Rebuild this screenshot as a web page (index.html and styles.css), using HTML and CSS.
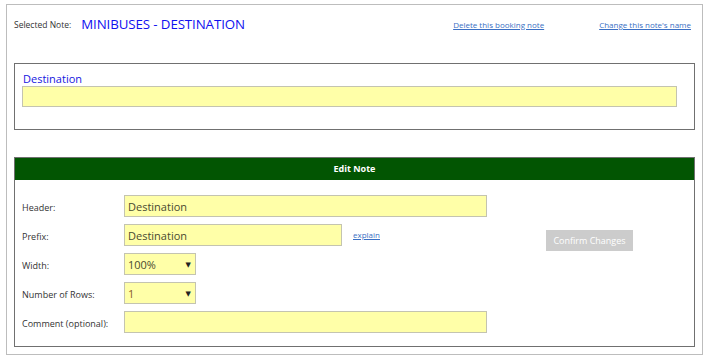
FILE: index.html
```html
<!DOCTYPE html>
<html>
<head>
<meta charset="utf-8">
<link rel="stylesheet" href="styles.css">
</head>
<body>
<div class="page">
  <div class="top">
    <span class="sel-label">Selected Note:</span>
    <span class="sel-title">MINIBUSES - DESTINATION</span>
    <a class="link link-del" href="#">Delete this booking note</a>
    <a class="link link-name" href="#">Change this note's name</a>
  </div>

  <div class="box preview">
    <div class="prev-label">Destination</div>
    <div class="input prev-input"></div>
  </div>

  <div class="box edit">
    <div class="edit-head">Edit Note</div>
    <div class="form">
      <div class="lbl">Header:</div>
      <div class="cell"><div class="input w-long">Destination</div></div>
      <div class="btn-cell"><button class="confirm">Confirm Changes</button></div>

      <div class="lbl">Prefix:</div>
      <div class="cell"><div class="input w-mid">Destination</div><a class="link explain" href="#">explain</a></div>

      <div class="lbl">Width:</div>
      <div class="cell"><div class="input select"><span>100%</span><span class="arrow">▼</span></div></div>

      <div class="lbl">Number of Rows:</div>
      <div class="cell"><div class="input select"><span class="num">1</span><span class="arrow">▼</span></div></div>

      <div class="lbl">Comment (optional):</div>
      <div class="cell"><div class="input w-long"></div></div>
    </div>
  </div>
</div>
</body>
</html>
```
FILE: styles.css
```css
* { box-sizing: border-box; }
html, body { margin: 0; padding: 0; background: #fff; }
body { font-family: "Open Sans", "DejaVu Sans", sans-serif; color: #333; }

.page {
  margin: 4px 0 0 6px;
  width: 697px;
  height: 351px;
  border: 1px solid #bdbdbd;
  padding: 0 7px;
}

.top {
  display: flex;
  align-items: center;
  height: 38px;
  margin-bottom: 20px;
}
.sel-label { font-size: 8.5px; color: #333; margin-left: 0; }
.sel-title { font-size: 13.3px; color: #1010f0; margin-left: 10px; letter-spacing: -0.1px; }
.link { font-size: 8px; color: #3a6fc4; text-decoration: underline; }
.link-del { margin-left: auto; }
.link-name { margin-left: 55px; margin-right: 4px; }

.box { border: 1px solid #707070; }

.preview {
  height: 67px;
  padding: 7px 17px 0 7px;
}
.prev-label { font-size: 11px; color: #1515e0; line-height: 15px; margin-left: 1px; }
.input {
  background: #ffffa8;
  border: 1px solid #c4c4b0;
  height: 22px;
  font-size: 11px;
  color: #4a4a30;
  line-height: 20px;
  padding: 1px 3px 0;
}
.prev-input { height: 21px; margin-top: 0; }

.edit {
  margin-top: 27px;
  height: 190px;
}
.edit-head {
  background: #025502;
  color: #fff;
  font-size: 9px;
  font-weight: bold;
  text-align: center;
  height: 22px;
  line-height: 22px;
}
.form {
  display: grid;
  grid-template-columns: 102px 422px 1fr;
  grid-auto-rows: 22px;
  row-gap: 7px;
  padding: 15px 0 0 7px;
}
.lbl { font-size: 9px; color: #333; display: flex; align-items: center; padding-top: 2px; }
.cell { display: flex; align-items: center; grid-column: 2; }
.w-long { width: 363px; }
.w-mid { width: 218px; }
.explain { margin-left: 11px; margin-top: -2px; }
.select {
  width: 72px;
  display: flex;
  justify-content: space-between;
  align-items: center;
}
.num { color: #8a5a2a; }
.arrow { font-size: 7px; color: #222; margin-right: 1px; }
.btn-cell { grid-column: 3; grid-row: 1 / span 5; align-self: start; }
.confirm {
  margin-top: 35px;
  width: 87px;
  height: 21px;
  background: #cccccc;
  border: none;
  color: #fff;
  font-family: "Open Sans", sans-serif;
  font-size: 9px;
  padding: 0;
}
```
